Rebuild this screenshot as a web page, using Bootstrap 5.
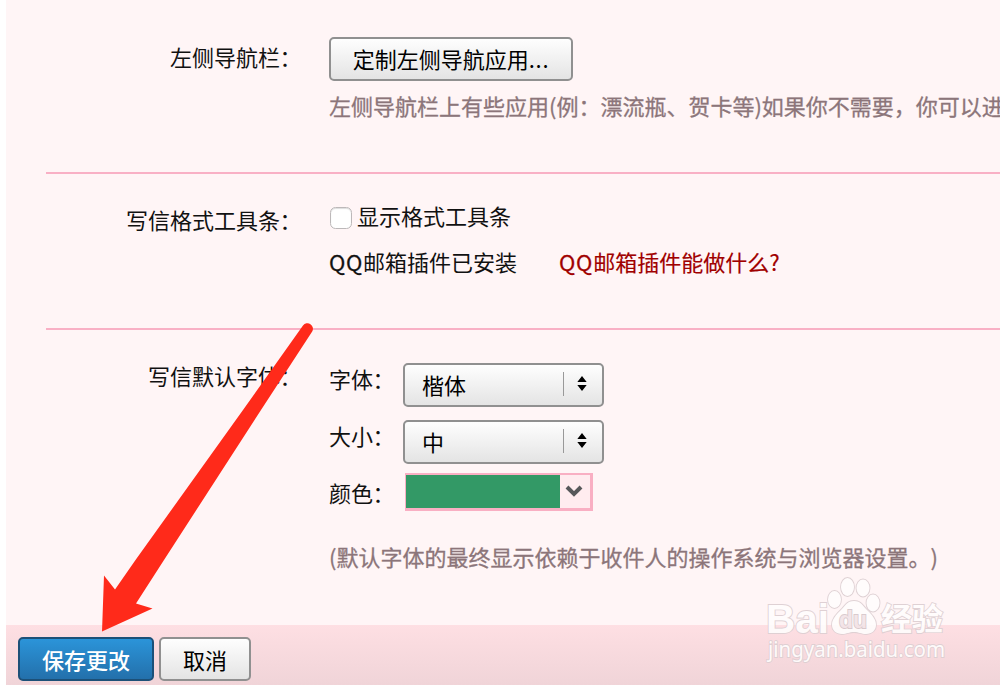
<!DOCTYPE html>
<html lang="zh-CN">
<head>
<meta charset="utf-8">
<meta name="viewport" content="width=device-width, initial-scale=1">
<title>邮箱设置</title>
<link href="https://cdn.jsdelivr.net/npm/bootstrap@5.3.0/dist/css/bootstrap.min.css" rel="stylesheet">
<style>
body{width:1000px;height:685px;overflow:hidden;background:#fff;color:#111;font-family:"Noto Sans CJK SC",sans-serif;font-size:22px;line-height:32px}
.settings{height:685px;margin-left:6px;background:#fff5f6}
.setting{margin-left:40px;white-space:nowrap;border-bottom:2px solid #f9b0c5}
.s1{height:174px}.s2{height:156px}.s3{height:294.5px;border:0}
.name{width:256px;flex:none;text-align:right}
.value{margin-left:27px}
.colon{display:inline-block;width:22px;text-indent:-.5px;text-align:left}
.hint{color:#8c757a;-webkit-text-stroke:.3px #8c757a}
.btn-gray,.btn-save{height:44px;border:2px solid #909090;border-radius:5px;background:linear-gradient(#fefefe,#e4e4e4);color:#000;font-size:22px;line-height:38px;padding:0 0 2px;box-shadow:none}
.btn-gray:hover{color:#000}
.btn-nav{width:244px}
.dots{letter-spacing:.7px}
.btn-save,.btn-save:hover{width:136px;border-color:#1c5078;background:linear-gradient(#2b94d9,#2370ab);color:#fff;font-weight:500}
.btn-cancel{width:92px;margin-left:5px}
.footbar .btn{line-height:40px;padding-bottom:0}
.tick{width:22px;height:22px;margin:6px 5px 0 1px;border:1.5px solid #bcb8b9;border-radius:5px;background-color:#fff;box-shadow:inset 0 1px 1px #ddd;flex:none}
.latin{letter-spacing:.7px;-webkit-text-stroke:.3px currentColor}
.help-link{color:#a00000;margin-left:42px;-webkit-text-stroke:.15px #a00000}
.field{margin-bottom:13px}
.field-name{width:74px;margin-top:-1px}
.picker{width:201px;padding:0 15px 0 17px}
.picker .me-auto{padding-bottom:2px}
.bar{width:1.5px;height:24px;margin-bottom:3px;background:#999}
.updown{margin:0 0 4px 13px}
.swatch{width:188px;height:38.5px;margin:-4.5px 0 0 2px;border:solid #f9afc3;border-width:2px 3px 3px 1.5px;background:#ffecef}
.swatch-fill{width:154px;height:100%;background:#339966}
.footbar{height:60.5px;padding:12.5px 0 0 12px;background:linear-gradient(#fedfe3,#f0d4d8)}
.overlay{position:absolute;left:0;top:0;pointer-events:none}
</style>
</head>
<body>
<main class="settings d-flex flex-column">
  <section class="setting s1 d-flex">
    <div class="name" style="padding-top:40px">左侧导航栏<span class="colon">：</span></div>
    <div class="value" style="padding-top:37px">
      <button class="btn btn-gray btn-nav d-block">定制左侧导航应用<span class="dots">...</span></button>
      <div class="hint" style="padding-top:8px">左侧导航栏上有些应用(例：漂流瓶、贺卡等)如果你不需要，你可以进入</div>
    </div>
  </section>
  <section class="setting s2 d-flex">
    <div class="name" style="padding-top:29px">写信格式工具条<span class="colon">：</span></div>
    <div class="value" style="padding-top:25px">
      <label class="d-flex align-items-center"><input class="form-check-input tick" type="checkbox"><span>显示格式工具条</span></label>
      <div class="d-flex" style="padding-top:14px"><span><span class="latin">QQ</span>邮箱插件已安装</span><a class="help-link text-decoration-none" href="#"><span class="latin">QQ</span>邮箱插件能做什么?</a></div>
    </div>
  </section>
  <section class="setting s3 d-flex">
    <div class="name" style="padding-top:29px">写信默认字体<span class="colon">：</span></div>
    <div class="value" style="padding-top:33px">
      <div class="d-flex field">
        <span class="field-name">字体<span class="colon">：</span></span>
        <button class="btn btn-gray picker d-flex align-items-center"><span class="me-auto">楷体</span><span class="bar"></span><svg class="updown" width="10" height="15" viewBox="0 0 10 16"><path d="M0 6.500 5 0l5 6.500zM0 9.500h10L5 16z"/></svg></button>
      </div>
      <div class="d-flex field">
        <span class="field-name">大小<span class="colon">：</span></span>
        <button class="btn btn-gray picker d-flex align-items-center"><span class="me-auto">中</span><span class="bar"></span><svg class="updown" width="10" height="15" viewBox="0 0 10 16"><path d="M0 6.500 5 0l5 6.500zM0 9.500h10L5 16z"/></svg></button>
      </div>
      <div class="d-flex field">
        <span class="field-name">颜色<span class="colon">：</span></span>
        <div class="swatch d-flex align-items-center"><div class="swatch-fill"></div><svg style="margin-left:5px" width="18" height="12" viewBox="0 0 18 12"><path d="m2 2 7 7 7-7" fill="none" stroke="#57585a" stroke-width="4"/></svg></div>
      </div>
      <div class="hint" style="padding-top:16px">(默认字体的最终显示依赖于收件人的操作系统与浏览器设置<span class="d-inline-block">。</span><span class="d-inline-block">)</span></div>
    </div>
  </section>
  <footer class="footbar d-flex">
    <button class="btn btn-save">保存更改</button>
    <button class="btn btn-gray btn-cancel">取消</button>
  </footer>
</main>
<svg class="overlay" width="1000" height="685" viewBox="0 0 1000 685">
  <path fill="#ff2a1a" d="M303 325.5A5.5 5.5 0 0 1 312.2 331.5L261 410 164 560 136 603.5 152.500 608.500 102 631.5 104 575.500 115 589.500 135.500 560 243 410z"/>
  <g fill="#fffdfd" stroke="#ddcfd2" stroke-width="1.8" paint-order="stroke" opacity=".92">
    <text x="766" y="633" font-family="Liberation Sans" font-weight="700" font-size="41" textLength="63" lengthAdjust="spacingAndGlyphs">Bai</text>
    <ellipse cx="834.500" cy="599.500" rx="6.500" ry="8.500"/><ellipse cx="847.500" cy="587" rx="6.500" ry="9"/><ellipse cx="863" cy="588" rx="6.500" ry="8.500"/><ellipse cx="873" cy="603" rx="6.500" ry="8.500"/>
    <path d="M854 601c-7 0-9 5-13 9-5 5-9 9-9 15 0 5 4 9 10 9 5 0 7-2 12-2s7 2 12 2c6 0 10-4 10-9 0-6-4-10-9-15-4-4-6-9-13-9z"/>
    <text x="839" y="628" font-family="Liberation Sans" font-weight="700" font-size="24" fill="#f3e4e7" stroke="#d6c8cb" textLength="28" lengthAdjust="spacingAndGlyphs">du</text>
    <text x="881" y="630" font-family="Noto Sans CJK SC" font-weight="700" font-size="31">经验</text>
    <text x="768" y="657" font-family="Noto Sans" font-size="22" textLength="177" lengthAdjust="spacingAndGlyphs">jingyan.baidu.com</text>
  </g>
</svg>
<script src="https://cdn.jsdelivr.net/npm/bootstrap@5.3.0/dist/js/bootstrap.bundle.min.js"></script>
</body>
</html>
